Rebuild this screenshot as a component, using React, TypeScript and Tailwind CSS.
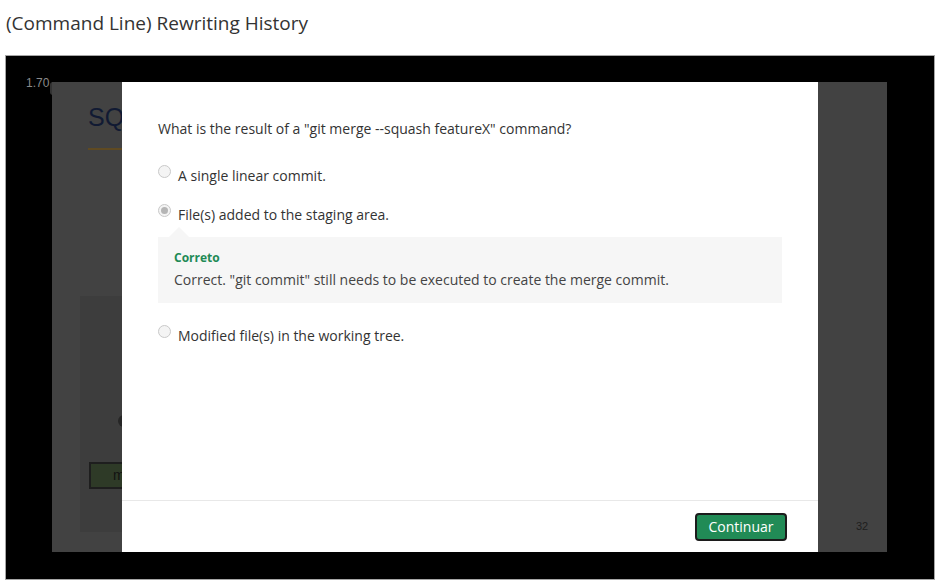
const FONT = "font-['Open_Sans',sans-serif]"

const options = [
  { label: 'A single linear commit.', checked: false },
  { label: 'File(s) added to the staging area.', checked: true },
  { label: 'Modified file(s) in the working tree.', checked: false },
]

function Radio({ checked }: { checked: boolean }) {
  return (
    <span className="mt-[1px] flex h-[13px] w-[13px] shrink-0 items-center justify-center rounded-full border border-[#c9c9c9] bg-[#f4f4f4]">
      {checked && <span className="h-[7px] w-[7px] rounded-full bg-[#b5b5b5]" />}
    </span>
  )
}

function Option({ label, checked }: { label: string; checked: boolean }) {
  return (
    <label className="flex items-start gap-[7px] text-[14px] leading-[20px] text-[#333]">
      <Radio checked={checked} />
      <span className="pt-[2px]">{label}</span>
    </label>
  )
}

function Feedback() {
  return (
    <div className="relative mt-[12px]">
      <span className="absolute -top-[10px] left-[11px] h-0 w-0 border-x-[10px] border-b-[10px] border-x-transparent border-b-[#f6f6f6]" />
      <div className="bg-[#f6f6f6] px-4 pt-[13px] pb-[13px]">
        <div className="text-[12px] font-bold leading-[16px] text-[#218a55]">Correto</div>
        <div className="mt-[4px] text-[14px] leading-[20px] text-[#444]">
          Correct. "git commit" still needs to be executed to create the merge commit.
        </div>
      </div>
    </div>
  )
}

function Modal() {
  return (
    <div className={`absolute top-0 bottom-0 left-[70px] flex w-[696px] flex-col bg-white ${FONT}`}>
      <div className="flex flex-1 flex-col px-9 pt-[37px]">
        <p className="text-[14px] leading-[20px] text-[#333]">
          What is the result of a "git merge --squash featureX" command?
        </p>
        <div className="mt-[25px]">
          <Option {...options[0]} />
        </div>
        <div className="mt-[17px]">
          <Option {...options[1]} />
        </div>
        <Feedback />
        <div className="mt-[21px]">
          <Option {...options[2]} />
        </div>
      </div>
      <div className="flex h-[52px] items-center justify-end border-t border-[#e8e8e8] pr-[31px]">
        <button className={`h-[28px] w-[92px] rounded-[4px] border-2 border-[#1c1c1c] bg-[#218b56] text-[14px] leading-none text-white ${FONT}`}>
          Continuar
        </button>
      </div>
    </div>
  )
}

function Slide() {
  return (
    <div className="relative h-[470px] w-[835px] bg-[#424242] font-['Liberation_Sans',sans-serif]">
      <span className="absolute top-[17px] left-[36px] text-[25px] leading-[36px] text-[#111a33]">SQL</span>
      <span className="absolute top-[66px] left-[36px] h-[2px] w-[90px] bg-[#5f4a22]" />
      <div className="absolute top-[214px] left-[28px] h-[236px] w-[600px] bg-[#3d3d3d]" />
      <span className="absolute top-[333px] left-[66px] h-[12px] w-[12px] rounded-full bg-[#262626]" />
      <div className="absolute top-[380px] left-[37px] flex h-[27px] w-[110px] items-center border-2 border-[#1e1e1e] bg-[#2e3a27] pl-[22px] text-[14px] text-[#121212]">
        m
      </div>
      <span className="absolute top-[437px] left-[804px] text-[11px] leading-[14px] text-[#1e1e1e]">32</span>
      <Modal />
    </div>
  )
}

export default function App() {
  return (
    <div className={`min-h-[586px] w-[944px] bg-white ${FONT}`}>
      <h1 className="pt-[9px] pl-[6px] text-[19px] leading-[28px] text-[#333]">
        (Command Line) Rewriting History
      </h1>
      <div className="relative mt-[18px] ml-[5px] h-[525px] w-[930px] border border-[#a6a6a6] bg-black pt-[26px] pl-[46px]">
        <span className="absolute top-[20px] left-[20px] font-['Liberation_Sans',sans-serif] text-[12px] leading-[14px] text-[#8a8a8a]">
          1.70
        </span>
        <span className="absolute top-[26px] left-[44px] h-[13px] w-[6px] rounded-l-[3px] bg-[#333]" />
        <Slide />
      </div>
    </div>
  )
}
